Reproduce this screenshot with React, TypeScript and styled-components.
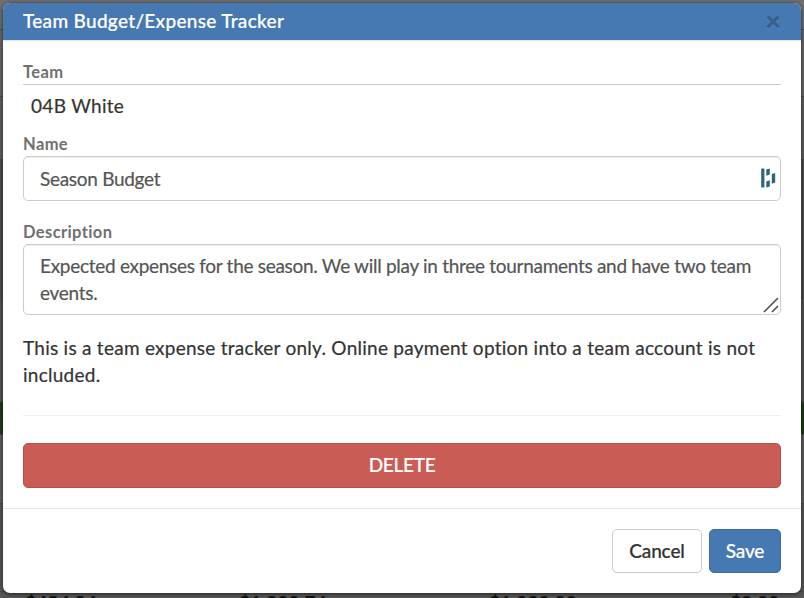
import styled, { createGlobalStyle } from 'styled-components';

const totals = ['$484.84', '$1,230.74', '$1,330.00', '$0.00'];

export default function App() {
  return (
    <>
      <GlobalStyle />
      <Page>
        <PageRows>
          <PageRow $height={30} $color="#707070" />
          <PageRow $height={67} $color="#686868" />
          <PageRow $height={63} $color="#606060" />
          <PageRow $height={139} $color="#4f4f4f" />
          <PageRow $height={103} $color="#555555" />
          <PageRow $height={33} $color="#1c3d1a" />
          <PageRow $height={69} $color="#606060" />
          <PageRow $height={88} $color="#585858" />
          <Totals>
            {totals.map((total) => (
              <span key={total}>{total}</span>
            ))}
          </Totals>
        </PageRows>
        <Modal>
          <Header>
            <Title>Team Budget/Expense Tracker</Title>
            <CloseButton aria-label="Close">×</CloseButton>
          </Header>
          <Body>
            <Label>Team</Label>
            <StaticValue>04B White</StaticValue>
            <Label htmlFor="name">Name</Label>
            <InputWrapper>
              <Input id="name" defaultValue="Season Budget" />
              <PasswordManagerIcon />
            </InputWrapper>
            <Label htmlFor="description">Description</Label>
            <TextAreaWrapper>
              <TextArea
                id="description"
                spellCheck={false}
                defaultValue="Expected expenses for the season. We will play in three tournaments and have two team events."
              />
              <ResizeGrip />
            </TextAreaWrapper>
            <Note>
              This is a team expense tracker only. Online payment option into a team account is not
              included.
            </Note>
            <Divider />
            <DeleteButton>DELETE</DeleteButton>
          </Body>
          <Footer>
            <Button>Cancel</Button>
            <Button $primary>Save</Button>
          </Footer>
        </Modal>
      </Page>
    </>
  );
}

const PasswordManagerIcon = () => (
  <ManagerSvg width="15" height="20" viewBox="0 0 15 20" fill="#2b6577">
    <rect x="0.2" y="0.4" width="3.2" height="19.2" rx="0.5" />
    <path d="M5.3 1.4 8.8 0.6V6.4L5.3 7.8zM5.3 13.4 8.8 12.2V18.4L5.3 19.6zM10.8 6 14.2 4.9V14.6L10.8 15.8z" />
  </ManagerSvg>
);

const ResizeGrip = () => (
  <GripSvg width="16" height="16" viewBox="0 0 16 16" stroke="#555" strokeWidth="1.7">
    <path d="M1 15 15 1M9 15l6-6" />
  </GripSvg>
);

const GlobalStyle = createGlobalStyle`
  * {
    box-sizing: border-box;
  }

  body {
    margin: 0;
    overflow: hidden;
    font-family: Lato, sans-serif;
    font-size: 19px;
    color: #333;
    -webkit-text-stroke: 0.2px;
  }
`;

const Page = styled.div`
  position: relative;
  height: 598px;
  padding: 3px;
  overflow: hidden;
`;

const PageRows = styled.div`
  position: absolute;
  inset: 0;
  z-index: -1;
  background: #585858;
`;

const PageRow = styled.div<{ $height: number; $color: string }>`
  height: ${({ $height }) => $height}px;
  background: ${({ $color }) => $color};
  border-bottom: 1px solid #4a4a4a;
`;

const Totals = styled.div`
  display: grid;
  grid-template-columns: 214px 250px 241px auto;
  padding-left: 25px;
  font-size: 19px;
  font-weight: 700;
  letter-spacing: 0.2px;
  line-height: 22px;
  color: #151515;
`;

const Modal = styled.div`
  display: flex;
  flex-direction: column;
  width: 798px;
  height: 590px;
  overflow: hidden;
  border-radius: 7px;
  background: #fff;
  box-shadow: 0 1px 5px rgba(0, 0, 0, 0.65);
`;

const Header = styled.div`
  display: flex;
  justify-content: space-between;
  align-items: center;
  height: 38px;
  padding: 0 20px 2px;
  border-bottom: 1px solid #e5e5e5;
  background: #4678b2;
`;

const Title = styled.h4`
  margin: 0;
  font-size: 19px;
  font-weight: 500;
  letter-spacing: 0.3px;
  line-height: 35px;
  color: #fff;
`;

const CloseButton = styled.button`
  padding: 0 0 1px;
  border: 0;
  background: none;
  font-family: Lato, sans-serif;
  font-size: 27px;
  font-weight: 900;
  line-height: 27px;
  color: #385f8e;
  text-shadow: 0 1px 0 #7196c3;
  -webkit-text-stroke: 0.5px;
`;

const Body = styled.div`
  display: flex;
  flex-direction: column;
  height: 467px;
  padding: 20px 20px 0;
`;

const Label = styled.label`
  height: 23px;
  font-size: 16.5px;
  font-weight: 700;
  letter-spacing: 0.38px;
  line-height: 23px;
  color: #707070;
  -webkit-text-stroke: 0;
`;

const StaticValue = styled.div`
  height: 49px;
  padding: 7px 8px 0;
  border-top: 1px solid #ccc;
  letter-spacing: 0.3px;
  line-height: 27px;
`;

const InputWrapper = styled.div`
  position: relative;
  height: 45px;
  margin-bottom: 20px;
`;

const Input = styled.input`
  display: block;
  width: 100%;
  height: 45px;
  padding: 0 16px;
  border: 1px solid #ccc;
  border-radius: 5px;
  background: #fff;
  box-shadow: inset 0 1px 1px rgba(0, 0, 0, 0.075);
  font-family: Lato, sans-serif;
  font-size: 19px;
  letter-spacing: -0.29px;
  color: #555;
`;

const ManagerSvg = styled.svg`
  position: absolute;
  top: 12px;
  right: 5px;
`;

const TextAreaWrapper = styled.div`
  position: relative;
  height: 71px;
  margin-bottom: 20px;
`;

const TextArea = styled.textarea`
  display: block;
  width: 100%;
  height: 71px;
  padding: 7px 16px;
  overflow: hidden;
  resize: none;
  border: 1px solid #ccc;
  border-radius: 5px;
  box-shadow: inset 0 1px 1px rgba(0, 0, 0, 0.075);
  font-family: Lato, sans-serif;
  font-size: 19px;
  letter-spacing: -0.29px;
  line-height: 27px;
  color: #555;
`;

const GripSvg = styled.svg`
  position: absolute;
  right: 2px;
  bottom: 2px;
`;

const Note = styled.p`
  margin: -1px 0 0;
  letter-spacing: 0.26px;
  line-height: 27px;
`;

const Divider = styled.hr`
  width: 100%;
  margin: 27px 0;
  border: 0;
  border-top: 1px solid #eee;
`;

const DeleteButton = styled.button`
  flex: none;
  height: 45px;
  padding: 0 0 2px;
  border: 1px solid #c24c45;
  border-radius: 5px;
  background: #c95c54;
  font-family: Lato, sans-serif;
  font-size: 19px;
  font-weight: 500;
  letter-spacing: -0.3px;
  color: #fff;
`;

const Footer = styled.div`
  display: flex;
  justify-content: flex-end;
  gap: 7px;
  flex: 1;
  padding: 20px 20px 0;
  border-top: 1px solid #e5e5e5;
`;

const Button = styled.button<{ $primary?: boolean }>`
  width: ${({ $primary }) => ($primary ? 72 : 90)}px;
  height: 44px;
  padding: 0 0 2px;
  border: 1px solid ${({ $primary }) => ($primary ? '#3f6ca1' : '#ccc')};
  border-radius: 5px;
  background: ${({ $primary }) => ($primary ? '#4678b2' : '#fff')};
  font-family: Lato, sans-serif;
  font-size: 19px;
  font-weight: 500;
  letter-spacing: -0.15px;
  color: ${({ $primary }) => ($primary ? '#fff' : '#333')};
`;
